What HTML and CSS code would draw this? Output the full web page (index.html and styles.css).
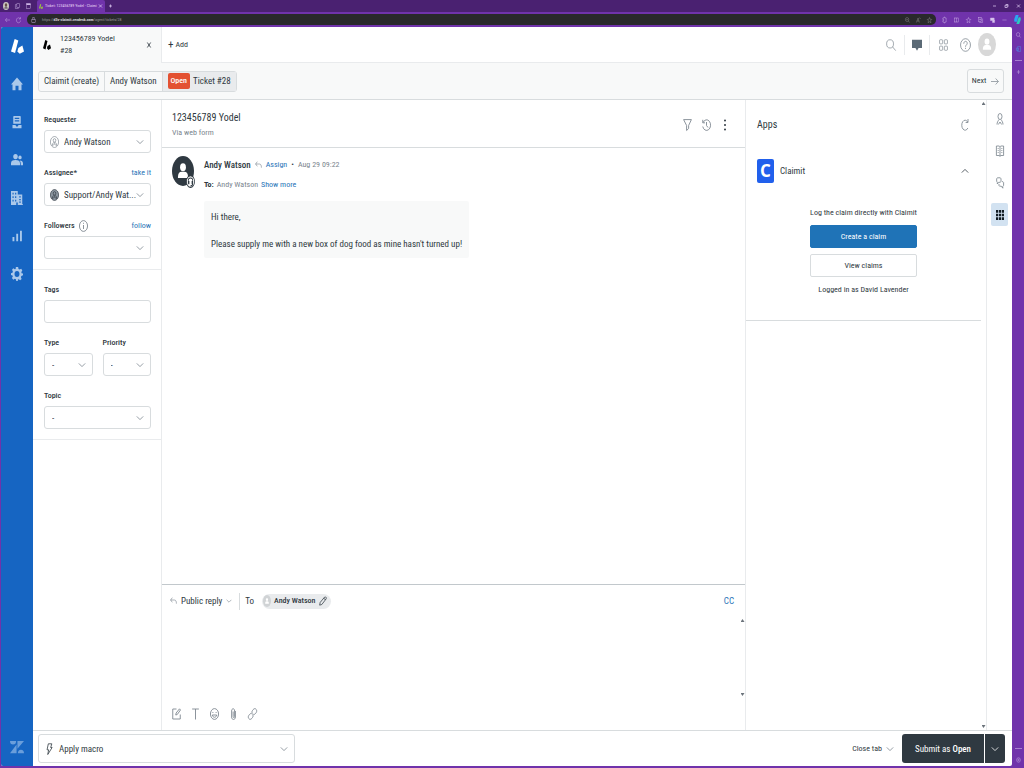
FILE: index.html
```html
<!DOCTYPE html>
<html lang="en">
<head>
<meta charset="utf-8">
<title>Ticket: 123456789 Yodel - Claimit</title>
<link rel="stylesheet" href="styles.css">
</head>
<body>
<svg class="sprite" aria-hidden="true">
  <symbol id="chevron" viewBox="0 0 10 10" preserveAspectRatio="none"><path d="M1 3l4 4 4-4"/></symbol>
  <symbol id="chevron-up" viewBox="0 0 10 10" preserveAspectRatio="none"><path d="M1 7l4-4 4 4"/></symbol>
  <symbol id="user" viewBox="0 0 16 16" preserveAspectRatio="none"><circle cx="8" cy="8" r="7.3"/><circle cx="8" cy="5.8" r="2.3"/><path d="M4.2 13.3V12c0-2 1.600-3.400 3.800-3.400s3.800 1.400 3.800 3.400v1.300M6 12.500l2-2.500 2 2.500"/></symbol>
  <symbol id="avatar" viewBox="0 0 24 24" preserveAspectRatio="none"><circle cx="12" cy="12" r="12"/><circle class="face" cx="12" cy="9" r="3.200"/><path class="face" d="M6.500 17.500v-1c0-2.500 1.500-4 4-4h3c2.500 0 4 1.500 4 4v1z"/></symbol>
  <symbol id="mark" viewBox="0 0 16 16" preserveAspectRatio="none"><path d="M4.500 0L9 1.500 5 15 0 13.300z"/><path d="M9 9.500L14 7l2 6.200-5.200 2.600-3-2.600z"/></symbol>
  <symbol id="reply" viewBox="0 0 12 12" preserveAspectRatio="none"><path d="M4 1L1 4.500 4 8M1 4.500h6.500c2.500 0 3.500 2 3.500 5.500"/></symbol>
</svg>

<header class="browser">
  <div class="tabstrip">
    <svg class="b-face" viewBox="0 0 12 12" preserveAspectRatio="none"><circle cx="6" cy="6" r="6" fill="#cbc7c0"/><circle cx="6" cy="4.500" r="2.500" fill="#665247"/><path d="M2.500 10c0-5 7-5 7 0z" fill="#746b74"/></svg>
    <svg class="b-icon" viewBox="0 0 12 12" preserveAspectRatio="none"><rect x="4" y="1" width="7" height="8" rx="1"/><path d="M4 3H1v8h7V9"/></svg>
    <svg class="b-icon" viewBox="0 0 12 12" preserveAspectRatio="none"><rect x="1.500" y="1.500" width="9" height="9"/><path d="M1 2.500h10" stroke-width="3"/></svg>
    <div class="browser-tab"><svg class="b-logo"><use href="#mark"/></svg><span class="tab-name">Ticket: 123456789 Yodel - Claimi</span><button type="button" aria-label="Close browser tab"><svg class="b-x" viewBox="0 0 4 4"><path d="M0 0l4 4M4 0L0 4"/></svg></button></div>
    <button class="new-tab" type="button" aria-label="New browser tab"><svg class="b-x" viewBox="0 0 4 4"><path d="M2 0v4M0 2h4"/></svg></button>
    <div class="window-buttons"><button type="button" aria-label="Minimize"><svg class="b-x" viewBox="0 0 4 4"><path d="M0 2h4"/></svg></button><button type="button" aria-label="Restore"><svg class="b-x" viewBox="0 0 4 4"><path d="M0 1h3v3H0zM1 0h3v3"/></svg></button><button type="button" aria-label="Close window"><svg class="b-x" viewBox="0 0 4 4"><path d="M0 0l4 4M4 0L0 4"/></svg></button></div>
  </div>
  <div class="toolbar">
    <button type="button" aria-label="Back"><svg class="b-icon" viewBox="0 0 12 12" preserveAspectRatio="none"><path d="M5 2L1 6l4 4M1 6h11"/></svg></button>
    <button type="button" aria-label="Reload"><svg class="b-icon" viewBox="0 0 12 12" preserveAspectRatio="none"><path d="M10 3.500A5 5 0 1 0 11 7M10.500 0v4H7"/></svg></button>
    <div class="address">
      <svg class="b-icon" viewBox="0 0 12 12" preserveAspectRatio="none"><rect x="2" y="5" width="8" height="6"/><path d="M4 5V1h4v4"/></svg>
      <span class="url">https://<b>d3v-claimit.zendesk.com</b>/agent/tickets/28</span>
      <svg class="b-icon dim" viewBox="0 0 12 12" preserveAspectRatio="none"><circle cx="5" cy="5" r="4"/><path d="M8 8l3 3M3 5h4"/></svg>
      <svg class="b-icon dim" viewBox="0 0 12 12" preserveAspectRatio="none"><path d="M1 11l4-9 3 9M2 8h5M8 1l3 3"/></svg>
      <svg class="b-icon dim" viewBox="0 0 12 12" preserveAspectRatio="none"><path d="M6 1l1.500 3.500 4 .5-3 2.500 1 4L6 9.500l-3.500 2 1-4-3-2.500 4-.5z"/></svg>
    </div>
    <div class="extensions">
      <svg class="b-icon" viewBox="0 0 12 12" preserveAspectRatio="none"><path d="M2 2h3V0h2v2h3v8H7v2H5v-2H2V7h2V5H2z"/></svg>
      <svg class="b-icon" viewBox="0 0 12 12" preserveAspectRatio="none"><rect x="1" y="2" width="10" height="8"/><path d="M6 2v8"/></svg>
      <svg class="b-icon" viewBox="0 0 12 12" preserveAspectRatio="none"><path d="M6 1l1.500 3.500 4 .5-3 2.500 1 4L6 9.500l-3.500 2 1-4-3-2.500 4-.5z"/></svg>
      <svg class="b-icon" viewBox="0 0 12 12" preserveAspectRatio="none"><rect x="1" y="1" width="8" height="8"/><path d="M3 11h8V3M5 3v4M3 5h4"/></svg>
      <svg class="b-icon" viewBox="0 0 12 12" preserveAspectRatio="none"><path d="M1 2h9v5H1zM6 6h5v5H6z" fill="#d9c6ef"/></svg>
      <svg class="b-icon" viewBox="0 0 12 12" preserveAspectRatio="none"><path d="M1 6h10"/></svg>
      <svg class="b-copilot" viewBox="0 0 12 12" preserveAspectRatio="none"><path d="M3 0h5L5 9H1C-1 6 2 3 3 0z" fill="#2aa5f4"/><path d="M8 3h3c2 3-1 6-2 9H4z" fill="#2dc9bd"/></svg>
    </div>
  </div>
</header>

<div class="window">
  <div class="app">
    <nav class="nav" aria-label="Main">
      <a href="#" aria-label="Zendesk" class="nav-logo"><svg><use href="#mark"/></svg></a>
      <a href="#" aria-label="Home"><svg viewBox="0 0 16 16" preserveAspectRatio="none"><path d="M8 .5l8 8h-2V15h-4v-5H6v5H2V8.500H0z"/></svg></a>
      <a href="#" aria-label="Views"><svg viewBox="0 0 16 16" preserveAspectRatio="none"><path fill-rule="evenodd" d="M4 1h8a1 1 0 011 1v8H3V2a1 1 0 011-1zm1 2v1.500h6V3zm0 3v1.500h6V6zM2 11.500h4l1 1.500h2l1-1.500h4V15H2z"/></svg></a>
      <a href="#" aria-label="Customers"><svg viewBox="0 0 16 16" preserveAspectRatio="none"><circle cx="6" cy="4" r="3"/><path d="M0 14v-2c0-3 2-4 6-4s6 1 6 4v2zM13 14h3v-2c0-2.500-1.500-3.500-4.500-3.500 1.500 1.500 1.500 3 1.500 5.500z"/><circle cx="12" cy="5" r="2.200"/></svg></a>
      <a href="#" aria-label="Organizations"><svg viewBox="0 0 16 16" preserveAspectRatio="none"><path fill-rule="evenodd" d="M0 0h9v4h6v11h1v1H9v-3H7v3H0zm2 2v2h1.500V2zm3.500 0v2H7V2zM2 6v2h1.500V6zm3.500 0v2H7V6zM2 10v2h1.500v-2zm3.500 0v2H7v-2zM11 6v1.500h2V6zm0 3v1.500h2V9zm0 3v1.500h2V12z"/></svg></a>
      <a href="#" aria-label="Reporting"><svg viewBox="0 0 16 16" preserveAspectRatio="none"><path d="M2 9h2.500v5H2zM7 5.500h2.500V14H7zM12 2h2.500v12H12z"/></svg></a>
      <a href="#" aria-label="Admin"><svg viewBox="0 0 16 16" preserveAspectRatio="none"><path fill-rule="evenodd" d="M6.500 0h3l.5 2.200 1.500.7L13.600 2l1.500 2-1.300 1.800.3 1.200 1.900.5v2l-2.200.7-.6 1.400 1 2-2 1.500-1.900-1.200-1 .4L9 16H7l-.5-2-1.400-.5L3 14.500 1.300 12.700l1.200-2L2 9.600 0 9V7l2-.5.5-1.500L1.400 3 3 1.500l2 1.200 1.200-.5zM8 4.700a3.300 3.300 0 100 6.600 3.300 3.300 0 000-6.600z"/></svg></a>
      <a href="#" aria-label="Zendesk products" class="nav-bottom"><svg viewBox="0 0 16 16" preserveAspectRatio="none"><path d="M0 1h7a3.500 4 0 01-7 0zM8.500 1H16l-7.500 9zM7.500 5v10H0zM9 15a3.500 4 0 017 0z"/></svg></a>
    </nav>

    <div class="content">
      <div class="topbar">
        <div class="ticket-tab">
          <svg class="tab-mark"><use href="#mark"/></svg>
          <div class="tab-text"><strong>123456789 Yodel</strong><span>#28</span></div>
          <button type="button" aria-label="Close"><svg class="close-x" viewBox="0 0 6 6" preserveAspectRatio="none"><path d="M.5.500l5 5M5.500.500l-5 5"/></svg></button>
        </div>
        <div class="topbar-main">
          <button class="add" type="button"><span class="plus">+</span> Add</button>
          <div class="topbar-icons">
            <button type="button" aria-label="Search"><svg class="icon i-lg" viewBox="0 0 16 16" preserveAspectRatio="none"><circle cx="6.500" cy="6.500" r="5.500"/><path d="M10.500 10.500L15.500 15.500"/></svg></button>
            <button class="framed" type="button" aria-label="Conversations"><svg class="i-lg chat" viewBox="0 0 16 16" preserveAspectRatio="none"><path d="M0 1h16v11h-5.500L8 15.500 5.500 12H0z"/></svg></button>
            <button type="button" aria-label="Products"><svg class="icon i-sq" viewBox="0 0 16 16" preserveAspectRatio="none"><rect x="1" y="1" width="5.500" height="5.500" rx="1"/><rect x="9.500" y="1" width="5.500" height="5.500" rx="1"/><rect x="1" y="9.500" width="5.500" height="5.500" rx="1"/><rect x="9.500" y="9.500" width="5.500" height="5.500" rx="1"/></svg></button>
            <button type="button" aria-label="Help"><svg class="icon i-help" viewBox="0 0 16 16" preserveAspectRatio="none"><circle cx="8" cy="8" r="7.200"/><path d="M5.500 6.500c0-3.500 5-3.500 5-.5C10.500 8 8 8 8 10M8 11.200v1.300"/></svg></button>
            <button type="button" aria-label="Profile"><svg class="me"><use href="#avatar"/></svg></button>
          </div>
        </div>
      </div>

      <div class="crumbbar">
        <nav class="crumbs" aria-label="Breadcrumb">
          <a href="#">Claimit (create)</a>
          <a href="#">Andy Watson</a>
          <a href="#" class="current"><span class="badge">Open</span>Ticket #28</a>
        </nav>
        <button class="next" type="button">Next <svg class="icon" viewBox="0 0 12 12" preserveAspectRatio="none"><path d="M0 6h11M7 2l4 4-4 4"/></svg></button>
      </div>

      <main class="columns">
        <form class="fields">
          <section>
            <div class="field">
              <label for="requester">Requester</label>
              <div class="control"><svg class="icon lead"><use href="#user"/></svg><select id="requester" class="with-icon"><option>Andy Watson</option></select><svg class="icon arrow"><use href="#chevron"/></svg></div>
            </div>
            <div class="field">
              <div class="label-row"><label for="assignee">Assignee*</label><a href="#">take it</a></div>
              <div class="control"><svg class="icon lead solid"><use href="#user"/></svg><select id="assignee" class="with-icon"><option>Support/Andy Wat...</option></select><svg class="icon arrow"><use href="#chevron"/></svg></div>
            </div>
            <div class="field">
              <div class="label-row"><label for="followers">Followers</label><svg class="icon info" viewBox="0 0 12 12" preserveAspectRatio="none"><circle cx="6" cy="6" r="5.400"/><path d="M6 5v4M6 2.800v1"/></svg><a href="#">follow</a></div>
              <div class="control"><select id="followers"><option></option></select><svg class="icon arrow"><use href="#chevron"/></svg></div>
            </div>
          </section>
          <section>
            <div class="field"><label for="tags">Tags</label><div class="control"><input id="tags" type="text"></div></div>
            <div class="field-pair">
              <div class="field"><label for="type">Type</label><div class="control"><select id="type"><option>-</option></select><svg class="icon arrow"><use href="#chevron"/></svg></div></div>
              <div class="field"><label for="priority">Priority</label><div class="control"><select id="priority"><option>-</option></select><svg class="icon arrow"><use href="#chevron"/></svg></div></div>
            </div>
            <div class="field"><label for="topic">Topic</label><div class="control"><select id="topic"><option>-</option></select><svg class="icon arrow"><use href="#chevron"/></svg></div></div>
          </section>
        </form>

        <section class="conversation">
          <header class="convo-head">
            <div><h1>123456789 Yodel</h1><p>Via web form</p></div>
            <div class="convo-tools">
              <button type="button" aria-label="Filter"><svg class="icon" viewBox="0 0 12 12" preserveAspectRatio="none"><path d="M.8.600h10.400L7.500 6.500v3L4.800 11.500v-5z"/></svg></button>
              <button type="button" aria-label="History"><svg class="icon wide" viewBox="0 0 12 12" preserveAspectRatio="none"><path d="M1.500 3.500A5.300 5.300 0 111 7.500M1 .8v3h3M6 3v3.500l2 2"/></svg></button>
              <button type="button" aria-label="More"><svg class="dots" viewBox="0 0 4 12"><circle cx="2" cy="1.500" r="1"/><circle cx="2" cy="6" r="1"/><circle cx="2" cy="10.500" r="1"/></svg></button>
            </div>
          </header>

          <article class="message">
            <div class="portrait">
              <svg class="portrait-img"><use href="#avatar"/></svg>
              <svg class="portrait-badge" viewBox="0 0 12 12" preserveAspectRatio="none"><circle cx="6" cy="6" r="5.400"/><path d="M3 8V5c0-3 6-3 6 0v3H8V5.500M4 5.500V8H3M9 8c0 1.500-1 2-3 2"/></svg>
            </div>
            <div class="message-main">
              <div class="byline"><strong>Andy Watson</strong><svg class="icon back"><use href="#reply"/></svg><a href="#">Assign</a><span class="bullet">•</span><time>Aug 29 09:22</time></div>
              <div class="recipients"><b>To:</b> <span>Andy Watson</span> <a href="#">Show more</a></div>
              <div class="bubble"><p>Hi there,</p><p>Please supply me with a new box of dog food as mine hasn't turned up!</p></div>
            </div>
          </article>

          <section class="composer">
            <div class="composer-head">
              <button class="mode" type="button"><svg class="icon back"><use href="#reply"/></svg>Public reply<svg class="icon small-arrow"><use href="#chevron"/></svg></button>
              <span class="to">To</span>
              <button class="pill" type="button"><svg class="pill-face"><use href="#avatar"/></svg>Andy Watson<svg class="icon pencil" viewBox="0 0 12 12" preserveAspectRatio="none"><path d="M1 11l.8-3.300L8.500 1.200c1-1 3.300 1 2.200 2.300L4.200 10.200zM7.300 2.500l2.300 2.300"/></svg></button>
              <a class="cc" href="#">CC</a>
            </div>
            <div class="editor">
              <textarea aria-label="Reply"></textarea>
              <div class="scroll" aria-hidden="true"><i class="up"></i><i class="down"></i></div>
            </div>
            <div class="format">
              <button type="button" aria-label="Compose"><svg class="icon" viewBox="0 0 12 12" preserveAspectRatio="none"><path d="M6 1H1v10h10V6.500M5 7l.5-2L10 .8 11.300 2 7 6.500z"/></svg></button>
              <button type="button" aria-label="Text"><svg class="icon" viewBox="0 0 12 12" preserveAspectRatio="none"><path d="M1.500 1h9M6 1v10.500"/></svg></button>
              <button type="button" aria-label="Emoji"><svg class="icon" viewBox="0 0 12 12" preserveAspectRatio="none"><circle cx="6" cy="6" r="5.400"/><path d="M3 7c.7 3 5.300 3 6 0zM3.200 4.500h1.300M7.500 4.500h1.300"/></svg></button>
              <button type="button" aria-label="Attach"><svg class="icon" viewBox="0 0 12 12" preserveAspectRatio="none"><path d="M8.500 3v6c0 3.300-5 3.300-5 0V3c0-3 4-3 4 0v5.500c0 1.500-2 1.500-2 0V3.500"/></svg></button>
              <button type="button" aria-label="Link"><svg class="icon" viewBox="0 0 12 12" preserveAspectRatio="none"><path d="M6 5.500c-1-1-1-2 0-3C7 1.300 8.500.200 10 .8c1.800.8 2 2.700 1 3.700-1 1.200-2.500 2.500-4 1.800M6 6.500c1 1 1 2 0 3-1 1.200-2.500 2.300-4 1.700C.2 10.400 0 8.500 1 7.500c1-1.200 2.500-2.500 4-1.800"/></svg></button>
            </div>
          </section>
        </section>

        <aside class="apps">
          <div class="apps-body">
            <div class="apps-head"><h2>Apps</h2><button type="button" aria-label="Reload apps"><svg class="icon" viewBox="0 0 12 12" preserveAspectRatio="none"><path d="M10 3A5 5 0 1 0 10.300 9M10.500 0v3.500H7"/></svg></button></div>
            <div class="claimit-head"><span class="claimit-logo" aria-hidden="true">C</span><span>Claimit</span><button type="button" aria-label="Collapse"><svg class="icon"><use href="#chevron-up"/></svg></button></div>
            <div class="claimit">
              <p>Log the claim directly with Claimit</p>
              <button class="primary" type="button">Create a claim</button>
              <button type="button">View claims</button>
              <p>Logged in as David Lavender</p>
            </div>
          </div>
          <div class="scroll" aria-hidden="true"><i class="up"></i><i class="down"></i></div>
        </aside>

        <nav class="rail" aria-label="Context">
          <button type="button" aria-label="User"><svg class="icon" viewBox="0 0 12 12" preserveAspectRatio="none"><circle cx="6" cy="3.500" r="3"/><path d="M1.500 11.500c0-2 1.500-3.500 3-5M10.500 11.500c0-2-1.500-3.500-3-5M3.500 11.500L6 9l2.500 2.500"/></svg></button>
          <button type="button" aria-label="Knowledge"><svg class="icon" viewBox="0 0 12 12" preserveAspectRatio="none"><path d="M.6 1H5l1 .8 1-.8h4.400v9.500H7l-1 1-1-1H.6zM6 2v9M2.500 3.500H4M2.500 5.500H4M2.500 7.500H4M8 3.500h1.500M8 5.500h1.500M8 7.500h1.500"/></svg></button>
          <button type="button" aria-label="Side conversations"><svg class="icon" viewBox="0 0 12 12" preserveAspectRatio="none"><path d="M2 .8h4.500l1 1v2.500l-1 1H4L2 7V5.300l-1-1V1.800zM4.500 7v1.500l.8.700H8l2.200 2V9.200l1.200-.8V5.500l-1-.8H9"/></svg></button>
          <button class="active" type="button" aria-label="Apps"><svg class="tiles" viewBox="0 0 11 11" preserveAspectRatio="none"><path d="M0 0h3v3H0zM4 0h3v3H4zM8 0h3v3H8zM0 4h3v3H0zM4 4h3v3H4zM8 4h3v3H8zM0 8h3v3H0zM4 8h3v3H4zM8 8h3v3H8z"/></svg></button>
        </nav>
      </main>

      <footer class="footer">
        <button class="macro" type="button"><svg class="icon bolt" viewBox="0 0 12 12" preserveAspectRatio="none"><path d="M4 .8h6L8 4.500h2.500L3 11.500l1.500-4.700H1.800z"/></svg>Apply macro<svg class="icon"><use href="#chevron"/></svg></button>
        <div class="footer-actions">
          <button class="close-tab" type="button">Close tab<svg class="icon"><use href="#chevron"/></svg></button>
          <div class="submit-group"><button class="submit" type="button">Submit as <b>Open</b></button><button class="submit-more" type="button" aria-label="Submit options"><svg class="icon"><use href="#chevron"/></svg></button></div>
        </div>
      </footer>
    </div>
  </div>
  <aside class="edge" aria-label="Browser sidebar">
    <svg class="b-icon" viewBox="0 0 12 12" preserveAspectRatio="none"><circle cx="5" cy="5" r="4"/><path d="M8 8l3 3"/></svg>
    <svg class="b-icon outlook" viewBox="0 0 12 12" preserveAspectRatio="none"><path d="M4 1h7v10H4zM1 4h5v5H1z"/></svg>
    <span class="edge-rule"></span>
    <svg class="b-icon" viewBox="0 0 12 12" preserveAspectRatio="none"><path d="M6 2v8M2 6h8"/></svg>
    <span class="edge-rule low"></span>
    <svg class="b-icon" viewBox="0 0 12 12" preserveAspectRatio="none"><circle cx="6" cy="6" r="4.500"/><circle cx="6" cy="6" r="1.500"/></svg>
  </aside>
</div>
</body>
</html>
```
FILE: styles.css
```css
:root {
  --ink: #2f3941;
  --muted: #7b858e;
  --line: #d8dcde;
  --soft: #e9ebed;
  --pale: #f8f9f9;
  --link: #1f73b7;
  --purple: #7033ab;
}
* { box-sizing: border-box; margin: 0; }
body {
  display: flex;
  flex-direction: column;
  height: 100vh;
  overflow: hidden;
  background: var(--purple);
  color: var(--ink);
  font: 8px/12px "Roboto Condensed", Roboto, "Open Sans", sans-serif;
}
button, input, select, textarea { font: inherit; color: inherit; }
button { padding: 0; border: 0; background: none; display: inline-flex; align-items: center; justify-content: center; }
a { color: var(--link); text-decoration: none; }
svg { display: block; flex: none; overflow: visible; }
.sprite { position: absolute; width: 0; height: 0; }
.icon { width: 10px; height: 12px; fill: none; stroke: var(--muted); stroke-width: 1; }

/* Browser chrome */
.browser { flex: none; color: #d9c6ef; }
.b-icon { width: 5px; height: 6px; fill: none; stroke: #cdb5e6; stroke-width: 1; }
.b-icon.dim { stroke: #8d8d8d; }
.b-x { width: 3px; height: 4px; fill: none; stroke: #d9c6ef; stroke-width: 1; }
.tabstrip { display: flex; align-items: center; height: 12px; padding-left: 3px; gap: 6px; background: #4a2171; }
.b-face { width: 6px; height: 8px; }
.browser-tab { display: flex; align-items: center; gap: 2px; height: 12px; padding: 0 3px 0 2px; border-radius: 2px 2px 0 0; background: var(--purple); color: #e9dcf6; }
.b-logo { width: 4px; height: 5px; fill: #9bc53d; }
.tab-name { white-space: nowrap; font-size: 4px; line-height: 8px; }
.new-tab { margin-left: -2px; }
.window-buttons { display: flex; gap: 9px; margin-left: auto; padding-right: 4px; }
.toolbar { display: flex; align-items: center; height: 15px; padding: 0 3px 0 5px; gap: 6px; background: var(--purple); }
.address { display: flex; flex: 1; align-items: center; gap: 6px; height: 11px; padding: 0 4px; border-radius: 5px; background: #29292b; color: #9b9b9b; font-size: 4px; line-height: 8px; }
.address b { color: #eee; font-weight: 500; }
.url { flex: 1; }
.extensions { display: flex; align-items: center; gap: 7px; }
.b-copilot { width: 7px; height: 9px; }

/* Window */
.window { display: flex; flex: 1; min-height: 0; padding: 0 0 2px 1px; }
.app { display: flex; flex: 1; min-width: 0; overflow: hidden; border-radius: 2px; background: #fff; }
.edge { display: flex; flex: none; flex-direction: column; align-items: center; gap: 8px; width: 12px; padding: 5px 0 3px; }
.edge .outlook { stroke: #4d8fe6; }
.edge-rule { width: 7px; height: 1px; background: #a57fce; }
.edge-rule.low { margin-top: auto; }

/* Main navigation */
.nav { display: flex; flex: none; flex-direction: column; width: 32px; background: #1665c2; }
.nav a { display: grid; place-items: center; height: 38px; }
.nav svg { width: 12px; height: 14px; fill: #aac8ea; }
.nav .nav-logo svg { width: 13px; height: 15px; fill: #fff; }
.nav .nav-bottom { margin-top: auto; }
.nav .nav-bottom svg { width: 14px; fill: #6a9edb; }

.content { display: flex; flex: 1; flex-direction: column; min-width: 0; }

/* Top bar */
.topbar { display: flex; height: 36px; }
.ticket-tab { display: flex; align-items: center; gap: 9px; width: 128px; padding: 0 10px; background: var(--pale); }
.tab-mark { width: 8px; height: 10px; }
.tab-text { display: flex; flex: 1; flex-direction: column; }
.tab-text strong { font-weight: 400; }
.close-x { width: 4px; height: 6px; stroke: var(--ink); }
.topbar-main { display: flex; flex: 1; align-items: center; justify-content: space-between; padding: 0 14px 0 6px; border-left: 1px solid var(--soft); border-bottom: 1px solid var(--soft); }
.plus { margin-right: 2px; font-size: 11px; }
.topbar-icons { display: flex; align-items: center; }
.topbar-icons button { min-width: 22px; height: 20px; }
.i-lg { width: 10px; height: 12px; }
.chat { fill: #5b6a76; }
.topbar-icons .framed { width: 26px; margin: 0 2px; border: solid var(--soft); border-width: 0 1px; }
.i-sq { width: 9px; height: 12px; }
.i-help { width: 11px; height: 14px; }
.me { width: 18px; height: 23px; fill: #d8d8d8; }
.face { fill: #fff; }

/* Breadcrumb bar */
.crumbbar { display: flex; align-items: center; justify-content: space-between; height: 37px; padding: 0 8px 0 5px; border-bottom: 1px solid var(--line); background: var(--pale); }
.crumbs { display: flex; height: 21px; border: 1px solid var(--line); border-radius: 3px; font-size: 9px; }
.crumbs a { display: flex; align-items: center; gap: 3px; padding: 0 5px; color: var(--ink); border-right: 1px solid var(--line); }
.crumbs .current { border: 0; background: var(--soft); }
.badge { padding: 1px 3px; border-radius: 2px; background: #e35132; color: #fff; font-size: 8px; line-height: 14px; font-weight: 500; }
.next { gap: 5px; width: 37px; height: 24px; border: 1px solid var(--line); border-radius: 3px; }
.next .icon { width: 8px; height: 9px; }

.columns { display: flex; flex: 1; min-height: 0; }

/* Ticket fields */
.fields { flex: none; width: 129px; border-right: 1px solid var(--soft); }
.fields section { display: flex; flex-direction: column; gap: 13px; padding: 13px 10px 10px 11px; border-bottom: 1px solid var(--soft); }
.field { display: flex; flex: 1; flex-direction: column; gap: 3px; min-width: 0; }
.field label { line-height: 14px; font-weight: 500; }
.label-row { display: flex; align-items: center; gap: 4px; height: 14px; }
.label-row a { margin-left: auto; }
.field-pair { display: flex; gap: 10px; }
.control { display: flex; position: relative; }
.control select, .control input { appearance: none; width: 100%; height: 23px; padding: 0 7px; border: 1px solid var(--line); border-radius: 3px; background: #fff; font-size: 9px; }
.control .with-icon { padding: 0 12px 0 19px; }
.lead { position: absolute; left: 6px; top: 6px; width: 9px; height: 12px; }
.lead.solid { fill: #8a949e; stroke: var(--ink); }
.arrow { position: absolute; right: 7px; top: 8px; width: 8px; height: 8px; pointer-events: none; }
.info { width: 9px; height: 12px; }

/* Conversation */
.conversation { display: flex; flex: 1; flex-direction: column; min-width: 0; border-right: 1px solid var(--soft); }
.convo-head { display: flex; align-items: center; justify-content: space-between; height: 48px; padding: 2px 15px 0 10px; border-bottom: 1px solid var(--line); }
h1, h2 { font-size: 10px; line-height: 16px; font-weight: 400; }
.convo-head p { color: var(--muted); line-height: 14px; }
.convo-tools { display: flex; gap: 9px; }
.convo-tools .icon { width: 9px; }
.convo-tools button { width: 10px; }
.dots { width: 4px; height: 12px; fill: var(--ink); }
.message { display: flex; flex: 1; gap: 10px; padding: 8px 10px; }
.portrait { position: relative; width: 22px; height: 30px; }
.portrait-img { width: 22px; height: 30px; fill: var(--ink); }
.portrait-badge { position: absolute; left: 14px; top: 19px; width: 9px; height: 13px; fill: #fff; stroke: var(--ink); }
.message-main { display: flex; flex-direction: column; align-items: flex-start; }
.byline, .recipients { display: flex; align-items: center; gap: 4px; height: 18px; }
.byline strong { font-size: 9px; font-weight: 500; }
.back { width: 7px; height: 8px; }
.byline time, .recipients span { color: var(--muted); }
.recipients { gap: 3px; margin-top: 2px; }
.bubble { display: flex; flex-direction: column; gap: 13px; margin-top: 7px; padding: 9px 7px 7px; border-radius: 2px; background: var(--pale); font-size: 9px; line-height: 14px; }

/* Composer */
.composer { flex: none; border-top: 1px solid #c2c8cc; }
.composer-head { display: flex; align-items: center; height: 32px; padding: 0 11px 0 8px; }
.mode { gap: 4px; height: 17px; padding-right: 7px; border-right: 1px solid var(--line); font-size: 9px; }
.small-arrow { width: 6px; height: 6px; }
.to { padding: 0 8px 0 5px; font-size: 9px; }
.pill { gap: 3px; height: 15px; padding: 0 4px 0 1px; border-radius: 8px; background: var(--soft); font-weight: 500; }
.pill-face { width: 8px; height: 12px; fill: #d0d3d5; }
.pencil { width: 8px; height: 10px; stroke: var(--ink); }
.cc { margin-left: auto; font-size: 9px; }
.editor { display: flex; height: 81px; }
.editor textarea { flex: 1; border: 0; padding: 4px 10px; resize: none; outline: 0; background: none; }
.scroll { display: flex; flex-direction: column; align-items: center; justify-content: space-between; width: 5px; padding: 2px 0; }
.scroll i { width: 4px; height: 3px; background: #6b737b; }
.scroll .up { clip-path: polygon(50% 0, 100% 100%, 0 100%); }
.scroll .down { clip-path: polygon(0 0, 100% 0, 50% 100%); }
.format { display: flex; align-items: center; gap: 10px; height: 32px; padding-left: 10px; }
.format .icon { width: 9px; }

/* Apps */
.apps { display: flex; flex: none; width: 241px; border-right: 1px solid var(--soft); }
.apps-body { flex: 1; }
.apps-head { display: flex; align-items: center; justify-content: space-between; height: 50px; padding: 0 12px 0 11px; }
.apps-head .icon { width: 8px; }
.claimit-head { display: flex; align-items: center; gap: 6px; height: 42px; padding: 0 12px 0 11px; font-size: 9px; }
.claimit-head button { margin-left: auto; }
.claimit-head .icon { width: 8px; height: 8px; stroke: var(--ink); }
.claimit-logo { display: grid; place-items: center; width: 17px; height: 24px; border-radius: 2px; background: #2160ec; color: #fff; font: 700 17px/24px "Open Sans", sans-serif; }
.claimit { display: flex; flex-direction: column; align-items: center; gap: 6px; padding: 14px 0 24px; border-bottom: 1px solid var(--line); }
.claimit p { line-height: 13px; }
.claimit button { width: 107px; height: 23px; border: 1px solid var(--line); border-radius: 2px; }
.claimit .primary { border-color: var(--link); background: var(--link); color: #fff; }

/* Context rail */
.rail { display: flex; flex: none; flex-direction: column; align-items: center; gap: 9px; width: 25px; padding-top: 7px; }
.rail button { width: 17px; height: 23px; border-radius: 2px; }
.rail .icon { width: 8px; }
.rail .active { background: #d2e2f1; }
.tiles { width: 8px; height: 10px; fill: #111b22; }

/* Footer */
.footer { display: flex; align-items: center; justify-content: space-between; height: 36px; padding: 0 7px 0 5px; border-top: 1px solid var(--line); }
.macro { justify-content: flex-start; gap: 6px; width: 257px; height: 29px; padding: 0 6px 0 7px; border: 1px solid var(--line); border-radius: 3px; font-size: 9px; }
.macro .icon:last-child { width: 8px; height: 8px; margin-left: auto; }
.macro .bolt { width: 7px; stroke: var(--ink); }
.footer-actions { display: flex; align-items: center; gap: 8px; }
.close-tab { gap: 4px; }
.close-tab .icon { width: 8px; height: 8px; }
.submit-group { display: flex; gap: 1px; height: 29px; }
.submit-group button { background: var(--ink); color: #fff; font-size: 9px; }
.submit { width: 82px; border-radius: 3px 0 0 3px; }
.submit b { margin-left: 2px; font-weight: 500; }
.submit-more { width: 20px; border-radius: 0 3px 3px 0; }
.submit-more .icon { width: 8px; height: 8px; stroke: #fff; }
```
